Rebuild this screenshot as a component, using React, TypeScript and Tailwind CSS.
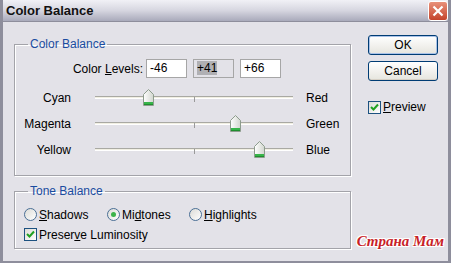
import React from 'react';

const font = { fontFamily: '"Liberation Sans", Arial, sans-serif' };

const Thumb = () => (
  <svg width="11" height="17" viewBox="0 0 11 17">
    <defs>
      <linearGradient id="tg" x1="0" y1="0" x2="1" y2="0">
        <stop offset="0" stopColor="#ffffff" />
        <stop offset="1" stopColor="#d2d6cf" />
      </linearGradient>
    </defs>
    <path d="M5.5 0.5 L10.5 5.5 V16.5 H0.5 V5.5 Z" fill="url(#tg)" stroke="#8d9c8d" />
    <rect x="1" y="13" width="9" height="3" fill="#37b44a" />
    <rect x="1" y="15" width="9" height="1" fill="#1f8f2f" />
  </svg>
);

const Slider: React.FC<{ left: string; right: string; value: number }> = ({ left, right, value }) => (
  <div className="flex items-center h-[26px]">
    <div className="w-[56px] text-right">{left}</div>
    <div className="relative ml-[24px] w-[198px] h-[26px]">
      <div className="absolute left-0 right-0 top-[11px] h-[3px] border-t border-[#a9a9a3] border-b border-b-white bg-[#f1efe2]" />
      <div className="absolute left-[99px] top-[12px] w-px h-[5px] bg-[#9a9a9a]" />
      <div className="absolute top-[4px]" style={{ left: 99 + (value / 100) * 99 - 5 }}>
        <Thumb />
      </div>
    </div>
    <div className="ml-[13px]">{right}</div>
  </div>
);

const Radio: React.FC<{ checked?: boolean }> = ({ checked }) => (
  <span className="inline-flex items-center justify-center w-[13px] h-[13px] rounded-full border border-[#4a6f95] bg-gradient-to-br from-[#dcdcd7] to-white mr-[2px]">
    {checked && <span className="w-[5px] h-[5px] rounded-full bg-[#3bb34a]" />}
  </span>
);

const Check = () => (
  <span className="inline-flex items-center justify-center w-[13px] h-[13px] border border-[#1c5180] bg-gradient-to-br from-[#dcdcd7] to-white mr-[2px]">
    <svg width="9" height="9" viewBox="0 0 9 9">
      <path d="M1 4 L3.5 6.5 L8 1.5" stroke="#21a121" strokeWidth="2" fill="none" />
    </svg>
  </span>
);

const Button: React.FC<{ label: React.ReactNode; def?: boolean }> = ({ label, def }) => (
  <div
    className={`w-[70px] h-[20px] rounded-[3px] border border-[#003c74] flex items-center justify-center bg-gradient-to-b from-white to-[#e6e5de] ${def ? 'shadow-[inset_0_0_0_1px_#a9c2e8]' : 'shadow-[inset_0_-1px_0_#d6d0c5]'}`}
  >
    {label}
  </div>
);

export default function App() {
  return (
    <div className="relative w-[451px] h-[263px] bg-[#e3e2e8] text-[12px] text-black border-x-[3px] border-b-[2px] border-[#8e8e9c] overflow-hidden" style={font}>
      <div className="h-[22px] -mx-[3px] flex items-center justify-between pl-[6px] pr-[3px] bg-gradient-to-b from-[#f1f1f6] via-[#d6d6e0] to-[#a9aabb] border-b border-[#8e8e9c]">
        <span className="font-bold text-[13px] text-[#111]">Color Balance</span>
        <span className="w-[20px] h-[20px] rounded-[3px] border border-white bg-gradient-to-b from-[#e8907a] to-[#c4432b] flex items-center justify-center">
          <svg width="12" height="12" viewBox="0 0 12 12">
            <path d="M1.5 1.5 L10.5 10.5 M10.5 1.5 L1.5 10.5" stroke="white" strokeWidth="2.2" />
          </svg>
        </span>
      </div>

      <div className="flex">
        <div className="ml-[11px] mt-[15px] w-[337px]">
          <fieldset className="border border-[#a3a3a9] shadow-[inset_1px_1px_0_white,1px_1px_0_white] h-[139px] px-0 pt-[8px]">
            <legend className="ml-[13px] px-[2px] text-[#1a4ca0] leading-[14px]">Color Balance</legend>
            <div className="flex items-center h-[19px]">
              <div className="w-[131px] text-right pr-[3px]">
                Color <span className="underline">L</span>evels:
              </div>
              <div className="w-[41px] h-[19px] bg-white border border-[#a6a6a6] pl-[3px] leading-[17px]">-46</div>
              <div className="ml-[6px] w-[41px] h-[19px] bg-[#e3e2e8] border border-[#a6a6a6] pl-[3px] leading-[17px]">
                <span className="bg-[#b0b0b4]">+41</span>
              </div>
              <div className="ml-[6px] w-[41px] h-[19px] bg-white border border-[#a6a6a6] pl-[3px] leading-[17px]">+66</div>
            </div>
            <div className="mt-[7px]">
              <Slider left="Cyan" right="Red" value={-46} />
              <Slider left="Magenta" right="Green" value={41} />
              <Slider left="Yellow" right="Blue" value={66} />
            </div>
          </fieldset>

          <fieldset className="mt-[8px] border border-[#a3a3a9] shadow-[inset_1px_1px_0_white,1px_1px_0_white] h-[65px] px-0 pt-0">
            <legend className="ml-[13px] px-[2px] text-[#1a4ca0] leading-[14px]">Tone Balance</legend>
            <div className="flex items-center h-[17px] pl-[9px] mt-[8px]">
              <label className="flex items-center w-[83px]">
                <Radio />
                <span><span className="underline">S</span>hadows</span>
              </label>
              <label className="flex items-center w-[82px]">
                <Radio checked />
                <span>Mi<span className="underline">d</span>tones</span>
              </label>
              <label className="flex items-center">
                <Radio />
                <span><span className="underline">H</span>ighlights</span>
              </label>
            </div>
            <label className="flex items-center h-[17px] pl-[9px] mt-[3px]">
              <Check />
              <span>Preser<span className="underline">v</span>e Luminosity</span>
            </label>
          </fieldset>
        </div>

        <div className="ml-[17px] mt-[13px] flex flex-col">
          <Button label="OK" def />
          <div className="mt-[6px]">
            <Button label="Cancel" />
          </div>
          <label className="mt-[17px] flex items-center">
            <Check />
            <span><span className="underline">P</span>review</span>
          </label>
        </div>
      </div>

      <div
        className="absolute right-[4px] bottom-[9px] italic font-bold text-[15px] text-[#c81e28]"
        style={{
          fontFamily: '"Liberation Serif", serif',
          textShadow: '1px 0 0 #fff, -1px 0 0 #fff, 0 1px 0 #fff, 0 -1px 0 #fff, 1px 1px 0 #fff, -1px -1px 0 #fff, 1px -1px 0 #fff, -1px 1px 0 #fff',
        }}
      >
        Страна Мам
      </div>
    </div>
  );
}
